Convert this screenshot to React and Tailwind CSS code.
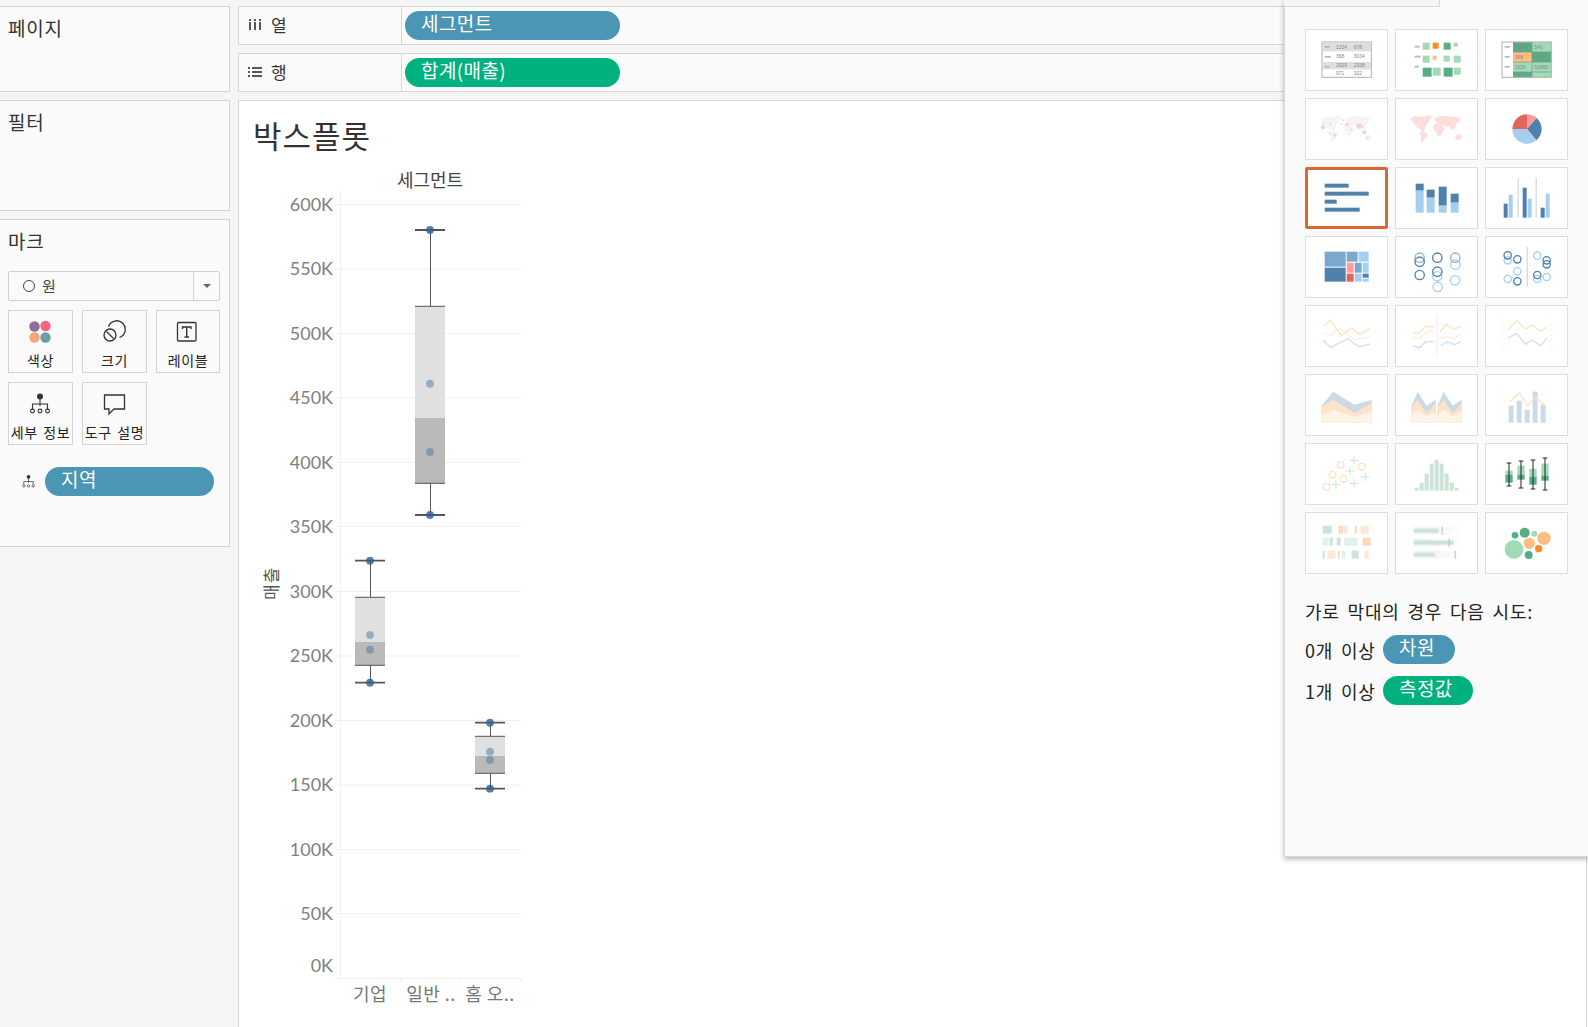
import React from 'react';

const blueDark = '#4f81ab';
const blueLight = '#a6cfef';
const green = '#9fdcb5';
const greenDark = '#57ad85';
const orange = '#ffbe7d';
const faintOrange = '#fde3c8';
const faintOrange2 = '#fdeedd';
const faintBlue = '#d3dfeb';
const mint = '#cce4d8';

const Rects = ({ items, fill }) =>
  items.map(([x1, y1, x2, y2], i) => (
    <rect key={i} x={x1} y={y1} width={x2 - x1} height={y2 - y1} fill={fill} />
  ));

const Line = ({ points, color, width = 4 }) => (
  <polyline points={points} fill="none" stroke={color} strokeWidth={width} />
);

const Circles = ({ items, color, r = 11, width = 4 }) =>
  items.map(([cx, cy], i) => (
    <circle key={i} cx={cx} cy={cy} r={r} fill="none" stroke={color} strokeWidth={width} />
  ));

const TinyText = ({ items }) =>
  items.map(([x, y, t], i) => (
    <text key={i} x={x} y={y} fontSize="15" fill="#888" fontFamily="Liberation Sans, sans-serif">
      {t}
    </text>
  ));

const Ticks = ({ x }) =>
  [270, 285, 300, 315, 330, 345, 360].map((y) => (
    <rect key={y} x={x} y={y} width="9" height="2" fill="#eee" />
  ));

const MapLand = ({ ox, oy, fill }) => (
  <g transform={`translate(${ox} ${oy})`} fill={fill}>
    <polygon points="47,60 60,55 85,57 100,52 112,56 105,66 98,74 92,86 88,98 82,102 78,94 68,90 58,78 50,68" />
    <polygon points="74,100 92,103 97,112 88,124 81,136 78,120" />
    <polygon points="118,62 128,56 150,54 176,56 198,60 192,72 184,78 180,92 170,96 162,86 146,82 126,76" />
    <polygon points="114,80 128,76 142,82 148,94 138,110 128,118 124,102 116,96" />
    <polygon points="180,114 194,108 202,120 190,126 182,124" />
  </g>
);

const thumbs = [
  {
    ox: 76, oy: 88,
    draw: (
      <>
        <rect x="127" y="127" width="148" height="106" fill="#fff" stroke="#b0b0b0" strokeWidth="3" />
        <Rects fill="#dedede" items={[[129, 129, 274, 155], [129, 187, 274, 209]]} />
        <Rects fill="#b5b5b5" items={[[135, 139, 150, 144], [135, 169, 153, 174], [135, 199, 148, 204]]} />
        <TinyText items={[[169, 147, '1234'], [222, 147, '678'], [169, 174, '368'], [222, 174, '3034'], [169, 202, '2929'], [222, 202, '2938'], [169, 225, '971'], [222, 225, '322']]} />
      </>
    ),
  },
  {
    ox: 346, oy: 88,
    draw: (
      <>
        <Rects fill="#bbb" items={[[405, 138, 420, 144], [405, 168, 423, 174], [405, 198, 417, 204]]} />
        <Rects fill={green} items={[[429, 129, 450, 150], [522, 129, 534, 141], [429, 168, 450, 189], [492, 168, 510, 186], [522, 168, 543, 189], [459, 204, 483, 228], [522, 204, 543, 225]]} />
        <Rects fill={greenDark} items={[[492, 129, 513, 150], [429, 204, 456, 231], [492, 204, 519, 231]]} />
        <Rects fill="#f28e2b" items={[[459, 129, 477, 147]]} />
        <Rects fill={orange} items={[[459, 168, 471, 180]]} />
      </>
    ),
  },
  {
    ox: 616, oy: 88,
    draw: (
      <>
        <rect x="667" y="127" width="148" height="106" fill="#fff" />
        <Rects fill={greenDark} items={[[700, 127, 757, 157], [757, 157, 815, 187], [700, 217, 757, 233]]} />
        <Rects fill={green} items={[[757, 127, 815, 157], [700, 187, 757, 217], [757, 187, 815, 217], [757, 217, 815, 233]]} />
        <Rects fill={orange} items={[[700, 157, 757, 187]]} />
        <Rects fill="#8a8a8a" items={[[700, 156, 815, 158], [700, 186, 815, 188], [700, 216, 815, 218], [756, 127, 758, 233]]} />
        <Rects fill="#b5b5b5" items={[[675, 139, 690, 144], [675, 169, 690, 174], [675, 199, 690, 204]]} />
        <rect x="667" y="127" width="148" height="106" fill="none" stroke="#b0b0b0" strokeWidth="3" />
        <TinyText items={[[705, 147, '1234'], [764, 147, '546'], [705, 177, '368'], [764, 177, '380'], [705, 207, '2929'], [764, 207, '52880']]} />
      </>
    ),
  },
  {
    ox: 76, oy: 295,
    draw: (
      <>
        <MapLand ox={76} oy={295} fill="#f5f5f5" />
        {[[130, 383, 6], [132, 372, 3], [152, 372, 3], [190, 362, 3], [186, 372, 3], [202, 374, 5], [238, 379, 8], [214, 390, 3], [254, 398, 6], [250, 381, 3], [150, 401, 3], [166, 406, 5], [264, 416, 3]].map(([cx, cy, r], i) => (
          <circle key={i} cx={cx} cy={cy} r={r} fill="#f3cfcf" />
        ))}
      </>
    ),
  },
  {
    ox: 346, oy: 295,
    draw: <MapLand ox={346} oy={295} fill="#fcdedc" />,
  },
  {
    ox: 616, oy: 295,
    draw: (
      <>
        <path d="M742 388 L742 344 A44 44 0 0 1 771 355 Z" fill="#ff9d9a" />
        <path d="M742 388 L771 355 A44 44 0 0 1 770 422 Z" fill={blueDark} />
        <path d="M742 388 L770 422 A44 44 0 0 1 698 388 Z" fill={blueLight} />
        <path d="M742 388 L698 388 A44 44 0 0 1 742 344 Z" fill="#e5645b" />
      </>
    ),
  },
  {
    ox: 76, oy: 502, selected: true,
    draw: <Rects fill={blueDark} items={[[135, 552, 207, 564], [135, 576, 267, 588], [135, 600, 171, 612], [135, 624, 240, 636]]} />,
  },
  {
    ox: 346, oy: 502,
    draw: (
      <>
        <Rects fill={blueDark} items={[[408, 552, 432, 573], [441, 570, 465, 594], [477, 561, 501, 618], [513, 582, 537, 609]]} />
        <Rects fill={blueLight} items={[[408, 573, 432, 639], [441, 594, 465, 639], [477, 618, 501, 639], [513, 609, 537, 639]]} />
      </>
    ),
  },
  {
    ox: 616, oy: 502,
    draw: (
      <>
        <Rects fill="#ccc" items={[[714, 534, 717, 654], [768, 534, 771, 654]]} />
        <Rects fill={blueDark} items={[[672, 612, 684, 654], [729, 564, 741, 654], [783, 624, 795, 654]]} />
        <Rects fill={blueLight} items={[[687, 585, 699, 654], [744, 597, 756, 654], [798, 582, 810, 654]]} />
      </>
    ),
  },
  {
    ox: 46, oy: 19,
    draw: (
      <>
        <Rects fill="#7aa8cf" items={[[105, 66, 168, 111], [171, 66, 204, 96], [195, 99, 216, 129]]} />
        <Rects fill={blueDark} items={[[105, 114, 168, 156], [219, 132, 237, 144]]} />
        <Rects fill={blueLight} items={[[207, 66, 237, 96], [219, 99, 237, 129], [195, 132, 216, 156], [219, 147, 237, 156]]} />
        <Rects fill="#ff9d9a" items={[[171, 99, 192, 129]]} />
        <Rects fill="#e5645b" items={[[171, 132, 192, 156]]} />
      </>
    ),
  },
  {
    ox: 316, oy: 19,
    draw: (
      <>
        <Circles r={14} color={blueLight} items={[[497, 105], [496, 152], [444, 172], [443, 140]]} />
        <Circles r={14} color="#8fb4d4" items={[[497, 84], [390, 84]]} />
        <Circles r={14} color={blueDark} items={[[390, 96], [443, 84], [390, 136], [443, 126]]} />
      </>
    ),
  },
  {
    ox: 586, oy: 19,
    draw: (
      <>
        <Rects fill="#ccc" items={[[711, 51, 714, 171]]} />
        <Circles color={blueLight} items={[[654, 92], [683, 125], [654, 148], [743, 78], [743, 148], [771, 142]]} />
        <Circles color={blueDark} items={[[654, 77], [683, 89], [683, 155], [771, 92], [771, 104], [743, 136]]} />
      </>
    ),
  },
  {
    ox: 46, oy: 226,
    draw: (
      <>
        <Line color={faintOrange2} points="102,308 123,317 150,296 195,330 240,322" />
        <Line color={faintOrange} points="102,290 123,272 156,318 186,294 207,314 242,297" />
        <Line color={faintBlue} points="100,332 123,354 174,327 210,352 242,343" />
      </>
    ),
  },
  {
    ox: 316, oy: 226,
    draw: (
      <>
        <Rects fill="#eee" items={[[441, 258, 444, 378]]} />
        <Line color={faintOrange2} points="369,325 390,327 420,300 432,310" />
        <Line color={faintOrange} points="369,308 387,311 408,290 432,292" />
        <Line color={faintBlue} points="369,349 390,354 408,336 432,336" />
        <Line color={faintOrange2} points="450,327 470,321 492,327 513,313" />
        <Line color={faintOrange} points="452,307 470,283 490,299 513,292" />
        <Line color={faintBlue} points="453,349 472,336 495,345 513,336" />
      </>
    ),
  },
  {
    ox: 586, oy: 226,
    draw: (
      <>
        <Ticks x={636} />
        <Ticks x={780} />
        <Line color={faintOrange} points="654,300 681,274 708,298 726,286 753,306 772,292" />
        <Line color={faintBlue} points="654,325 681,312 708,344 726,331 753,348 772,324" />
      </>
    ),
  },
  {
    ox: 46, oy: 433,
    draw: (
      <>
        <polygon fill="#ccd9e6" points="96,528 131,486 195,525 246,510 246,579 96,579" />
        <polygon fill="#fde4c8" points="96,530 131,510 195,549 246,520 246,579 96,579" />
        <polygon fill="#fef3e6" points="96,558 131,540 195,562 246,545 246,579 96,579" />
      </>
    ),
  },
  {
    ox: 316, oy: 433,
    draw: (
      <>
        {[0, 78].map((dx) => (
          <g key={dx} transform={`translate(${dx} 0)`}>
            <polygon fill="#ccd9e6" points="366,528 384,486 411,528 438,510 438,579 366,579" />
            <polygon fill="#fde4c8" points="366,534 384,510 411,550 438,522 438,579 366,579" />
            <polygon fill="#fef3e6" points="366,556 384,540 411,560 438,546 438,579 366,579" />
          </g>
        ))}
      </>
    ),
  },
  {
    ox: 586, oy: 433,
    draw: (
      <>
        <Rects fill="#f0f0f0" items={[[636, 477, 645, 479], [636, 498, 645, 500], [636, 519, 645, 521], [636, 540, 645, 542], [636, 567, 645, 569], [780, 477, 789, 479], [780, 498, 789, 500], [780, 519, 789, 521], [780, 540, 789, 542], [780, 567, 789, 569]]} />
        <Rects fill="#ccd9e6" items={[[657, 528, 672, 579], [681, 513, 696, 579], [705, 540, 720, 579], [729, 486, 744, 579], [753, 525, 768, 579]]} />
        <Line color={faintOrange} points="660,516 690,490 714,528 738,502 766,528" />
      </>
    ),
  },
  {
    ox: 46, oy: 220,
    draw: (
      <>
        <Circles r={10} color={faintOrange} items={[[153, 285], [129, 315], [216, 291], [162, 327], [111, 351]]} />
        {[[193, 272], [181, 304], [139, 344], [227, 322], [193, 341]].map(([x, y], i) => (
          <path key={i} d={`M${x - 13} ${y}H${x + 13}M${x} ${y - 13}V${y + 13}`} stroke="#c9e5d9" strokeWidth="3" />
        ))}
      </>
    ),
  },
  {
    ox: 316, oy: 220,
    draw: <Rects fill={mint} items={[[375, 354], [390, 339], [405, 312], [420, 282], [435, 270], [450, 282], [465, 312], [480, 339], [495, 354]].map(([x, y]) => [x, y, x + 12, 363])} />,
  },
  {
    ox: 586, oy: 220,
    draw: (
      <>
        {[[658, 280, 349, 303, 315, 339], [694, 274, 355, 288, 315, 330], [730, 271, 358, 297, 321, 345], [766, 265, 361, 282, 318, 333]].map(([x, top, bottom, boxTop, mid, boxBottom]) => (
          <g key={x}>
            <rect x={x - 11} y={boxTop} width="22" height={mid - boxTop} fill={green} />
            <rect x={x - 11} y={mid} width="22" height={boxBottom - mid} fill={greenDark} />
            <path d={`M${x} ${top}V${bottom}M${x - 7} ${top}H${x + 7}M${x - 7} ${bottom}H${x + 7}`} stroke="#222" strokeWidth="3" fill="none" />
          </g>
        ))}
      </>
    ),
  },
  {
    ox: 46, oy: 427,
    draw: (
      <>
        <Rects fill={mint} items={[[99, 468, 126, 492], [120, 504, 129, 528], [141, 504, 153, 528], [99, 543, 105, 567], [186, 543, 207, 567]]} />
        <Rects fill="#fdd9b8" items={[[147, 468, 160, 492], [195, 468, 201, 492], [219, 504, 243, 528], [144, 543, 150, 567]]} />
        <Rects fill="#fde8d4" items={[[162, 468, 174, 492], [213, 468, 237, 492], [114, 543, 138, 567], [225, 543, 237, 567]]} />
        <Rects fill="#e2f2ea" items={[[99, 504, 117, 528], [162, 504, 204, 528], [156, 543, 168, 567]]} />
      </>
    ),
  },
  {
    ox: 316, oy: 427,
    draw: (
      <>
        {[[471, 447, 457], [507, 492, 478], [543, 435, 496]].map(([y, barEnd, marker]) => (
          <g key={y}>
            <rect x="372" y={y} width="75" height="24" fill="#f3f3f3" />
            <rect x="447" y={y} width="45" height="24" fill="#f9f9f9" />
            <rect x="492" y={y} width="18" height="24" fill="#fcfcfc" />
            <rect x="372" y={y + 6} width={barEnd - 372} height="12" fill={mint} />
            <rect x={marker - 1} y={y} width="3" height="24" fill="#bbb" />
          </g>
        ))}
      </>
    ),
  },
  {
    ox: 586, oy: 427,
    draw: (
      <>
        {[[676, 497, 10, greenDark], [705, 489, 15, greenDark], [734, 492, 9, green], [763, 506, 20, orange], [719, 521, 17, orange], [747, 537, 11, '#f28e2b'], [717, 556, 12, greenDark], [673, 539, 28, green]].map(([cx, cy, r, fill], i) => (
          <circle key={i} cx={cx} cy={cy} r={r} fill={fill} />
        ))}
      </>
    ),
  },
];

const Thumb = ({ ox, oy, selected, draw }) => (
  <div className={`relative h-[62px] w-[83px] bg-white ${selected ? 'rounded-[2px] border-[3px] border-[#dd6633]' : 'border border-[#dedede]'}`}>
    <svg
      className={`absolute ${selected ? 'left-[-2px] top-[-2px]' : 'left-0 top-0'}`}
      width="81"
      height="60"
      viewBox={`${ox + 3} ${oy + 3} 243 180`}
    >
      {draw}
    </svg>
  </div>
);

const Pill = ({ label, color, className }) => (
  <div className={`h-[29px] rounded-full pl-[16px] text-[19px] leading-[24px] tracking-[0.4px] text-white ${className}`} style={{ backgroundColor: color }}>
    {label}
  </div>
);

const ColorIcon = () => (
  <svg width="24" height="24" viewBox="0 0 24 24">
    <circle cx="6.5" cy="6.5" r="5.2" fill="#8e6f9e" />
    <circle cx="17.5" cy="6" r="5.2" fill="#f4677f" />
    <circle cx="6.5" cy="17.5" r="5.2" fill="#f4a77d" />
    <circle cx="17.5" cy="17.5" r="5.2" fill="#6e9daa" />
  </svg>
);

const SizeIcon = () => (
  <svg width="24" height="24" viewBox="0 0 24 24" fill="none" stroke="#333" strokeWidth="1.3">
    <path d="M6.5 6.5A8.6 8.6 0 1 1 17.5 17.5" />
    <circle cx="8" cy="15" r="6" />
    <path d="M4.5 11.5L11.5 18.5" />
  </svg>
);

const LabelIcon = () => (
  <svg width="24" height="24" viewBox="0 0 24 24" fill="none" stroke="#333">
    <rect x="2.5" y="2.5" width="18.5" height="18.5" rx="1" strokeWidth="1.3" />
    <path d="M7.5 9V7H16V9M11.7 7V17M9.5 17H14" strokeWidth="1.4" />
  </svg>
);

const DetailIcon = ({ size = 24 }) => (
  <svg width={size} height={size} viewBox="0 0 24 24" fill="none" stroke="#333" strokeWidth="1.1">
    <circle cx="12" cy="4.5" r="3" fill="#333" stroke="none" />
    <path d="M12 7V14M4.5 17V12H19.5V17" />
    <circle cx="4.5" cy="19" r="1.9" />
    <circle cx="12" cy="19" r="1.9" />
    <circle cx="19.5" cy="19" r="1.9" />
  </svg>
);

const TooltipIcon = () => (
  <svg width="24" height="24" viewBox="0 0 24 24" fill="none" stroke="#333" strokeWidth="1.3">
    <path d="M2.5 3H22.5V17H12L7 22V17H2.5Z" />
  </svg>
);

const MarkCard = ({ icon, label, className = 'w-[65px]' }) => (
  <div className={`flex h-[63px] flex-col items-center border border-[#d4d4d4] pt-[9px] ${className}`}>
    <div className="h-[24px] pr-[2px]">{icon}</div>
    <div className="mt-[7px] whitespace-nowrap text-[14px] leading-[18px] tracking-[0.6px] text-[#222] [word-spacing:2px]">{label}</div>
  </div>
);

const Section = ({ title, className, children }) => (
  <div className={`border-y border-r border-[#d2d2d2] bg-[#fafafa] ${className}`}>
    <div className="pl-[8px] pt-[8px] text-[19px] leading-[25px] tracking-[0.8px] text-[#333]">{title}</div>
    {children}
  </div>
);

const Shelf = ({ icon, label, pill, color }) => (
  <div className="flex h-[39px] border-y border-l border-[#d6d6d6] bg-[#fafafa]">
    <div className="flex w-[163px] items-center border-r border-[#d6d6d6] pb-[2px] pl-[9px] text-[17px] text-[#333]">
      <div className="w-[23px]">{icon}</div>
      {label}
    </div>
    <div className="pl-[3px] pt-[4px]">
      <Pill label={pill} color={color} className="w-[215px]" />
    </div>
  </div>
);

const axisLabels = ['600K', '550K', '500K', '450K', '400K', '350K', '300K', '250K', '200K', '150K', '100K', '50K'];
const axisY = [204, 268.5, 333, 397.5, 462, 526, 591, 655.5, 720, 784.5, 849, 913];

const boxes = [
  { x: 370.5, top: 560.7, q3: 597.3, mid: 642, q1: 665.3, bottom: 682.7, dots: [635, 649.7] },
  { x: 430.5, top: 230, q3: 306.3, mid: 418, q1: 483.3, bottom: 515, dots: [383.7, 452] },
  { x: 490.5, top: 722.7, q3: 736.3, mid: 756, q1: 773.3, bottom: 788.7, dots: [751.7, 760] },
];

const Chart = () => (
  <svg width="300" height="867" viewBox="239 160 300 867" className="block">
    <text x="430" y="187" textAnchor="middle" fontSize="18" fill="#444" fontFamily="Noto Sans CJK KR, sans-serif">세그먼트</text>
    <text transform="translate(278 600) rotate(-90)" fontSize="17" letterSpacing="1" fill="#555" fontFamily="Noto Sans CJK KR, sans-serif">매출</text>

    {axisY.map((y) => (
      <rect key={y} x="335" y={y} width="186" height="1" fill="#f0f0f0" />
    ))}
    <rect x="335" y="978" width="186" height="1" fill="#f0f0f0" />
    <rect x="340" y="190" width="1" height="792" fill="#f0f0f0" />
    {[400, 460, 520].map((x) => (
      <rect key={x} x={x} y="979" width="1" height="3" fill="#f0f0f0" />
    ))}

    {axisLabels.map((label, i) => (
      <text key={label} x="333" y={axisY[i] + 6.8} textAnchor="end" fontSize="18" fill="#808080" fontFamily="Lato, sans-serif">{label}</text>
    ))}
    <text x="333" y="972" textAnchor="end" fontSize="18" fill="#808080" fontFamily="Lato, sans-serif">0K</text>

    {boxes.map((b) => (
      <g key={b.x}>
        <rect x={b.x - 15.5} y={b.q3} width="30" height={b.mid - b.q3} fill="#e0e0e0" />
        <rect x={b.x - 15.5} y={b.mid} width="30" height={b.q1 - b.mid} fill="#bababa" />
        <path d={`M${b.x} ${b.top}V${b.q3}M${b.x} ${b.q1}V${b.bottom}`} stroke="#555" strokeWidth="1" />
        <path d={`M${b.x - 15.5} ${b.q3}h30M${b.x - 15.5} ${b.q1}h30`} stroke="#555" strokeWidth="1" />
        <path d={`M${b.x - 15.5} ${b.top}h30M${b.x - 15.5} ${b.bottom}h30`} stroke="#555" strokeWidth="1.8" />
        {[b.top, b.bottom].map((y) => (
          <circle key={y} cx={b.x - 0.5} cy={y} r="3.9" fill="#2f5f92" opacity="0.8" />
        ))}
        {b.dots.map((y) => (
          <circle key={y} cx={b.x - 0.5} cy={y} r="3.9" fill="#3f6c9b" opacity="0.45" />
        ))}
      </g>
    ))}

    <text x="370" y="1001" textAnchor="middle" fontSize="18" letterSpacing="0.5" fill="#777" fontFamily="Noto Sans CJK KR, sans-serif">기업</text>
    <text x="431" y="1001" textAnchor="middle" fontSize="18" letterSpacing="0.5" fill="#777" fontFamily="Noto Sans CJK KR, sans-serif">일반 ..</text>
    <text x="490" y="1001" textAnchor="middle" fontSize="18" letterSpacing="0.5" fill="#777" fontFamily="Noto Sans CJK KR, sans-serif">홈 오..</text>
  </svg>
);

export default function App() {
  return (
    <div className="relative flex h-[1027px] w-[1588px] overflow-hidden bg-[#f5f5f5] font-['Noto_Sans_CJK_KR',sans-serif]">
      {/* left cards */}
      <div className="flex w-[230px] shrink-0 flex-col gap-[8px] pt-[6px]">
        <Section title="페이지" className="h-[86px]" />
        <Section title="필터" className="h-[111px]" />
        <Section title="마크" className="h-[328px]">
          <div className="mx-[8px] mt-[18px] flex h-[30px] w-[212px] items-center rounded-[2px] border border-[#d0d0d0]">
            <div className="flex flex-1 items-center gap-[7px] pl-[14px] text-[15px] text-[#444]">
              <span className="h-[12px] w-[12px] rounded-full border-[1.5px] border-[#444]" />
              원
            </div>
            <div className="flex h-full w-[26px] items-center justify-center border-l border-[#d8d8d8]">
              <span className="h-0 w-0 border-x-[4px] border-t-[4px] border-x-transparent border-t-[#666]" />
            </div>
          </div>
          <div className="ml-[8px] mt-[9px] flex w-[215px] flex-wrap gap-x-[9px] gap-y-[9px]">
            <MarkCard icon={<ColorIcon />} label="색상" />
            <MarkCard icon={<SizeIcon />} label="크기" />
            <MarkCard icon={<LabelIcon />} label="레이블" className="w-[64px]" />
            <MarkCard icon={<DetailIcon />} label="세부 정보" />
            <MarkCard icon={<TooltipIcon />} label="도구 설명" />
          </div>
          <div className="mt-[22px] flex items-center pl-[21px]">
            <div className="w-[24px]"><DetailIcon size={15} /></div>
            <Pill label="지역" color="#4b96b4" className="w-[169px]" />
          </div>
        </Section>
      </div>

      {/* shelves + view */}
      <div className="ml-[8px] flex w-[1349px] shrink-0 flex-col gap-[8px] pt-[6px]">
        <Shelf
          icon={<svg width="14" height="12" viewBox="0 0 14 12" fill="#555"><path d="M1 3h2v8H1zM1 0h2v2H1zM6 3h2v8H6zM6 0h2v2H6zM11 3h2v8h-2zM11 0h2v2h-2z" /></svg>}
          label="열"
          pill="세그먼트"
          color="#4b96b4"
        />
        <Shelf
          icon={<svg width="14" height="12" viewBox="0 0 14 12" fill="#555"><path d="M0 1h2v2H0zM4 1h10v2H4zM0 5h2v2H0zM4 5h10v2H4zM0 9h2v2H0zM4 9h10v2H4z" /></svg>}
          label="행"
          pill="합계(매출)"
          color="#00b180"
        />
        <div className="flex-1 border-l border-r border-t border-[#d6d6d6] bg-white">
          <div className="h-[59px] pl-[14px] pt-[13px] text-[31px] leading-[42px] tracking-[1px] text-[#333]">박스플롯</div>
          <Chart />
        </div>
      </div>

      {/* show me panel */}
      <div className="absolute right-0 top-0 h-[857px] w-[304px] border-b border-l border-[#d8d8d8] bg-[#fafafa] pl-[20px] pt-[29px] shadow-[0_2px_5px_rgba(0,0,0,0.3)]">
        <div className="absolute left-[-1px] top-0 h-[7px] w-[156px] border-b border-r border-[#d8d8d8] bg-[#f5f5f5]" />
        <div className="grid w-[263px] grid-cols-[83px_83px_83px] gap-x-[7px] gap-y-[7px]">
          {thumbs.map((t) => (
            <Thumb key={`${t.ox}-${t.oy}`} {...t} />
          ))}
        </div>
        <div className="mt-[24px] text-[18px] leading-[27px] tracking-[0.8px] text-[#222] [word-spacing:3px]">가로 막대의 경우 다음 시도:</div>
        <div className="mt-[10px] flex items-center gap-[7px] text-[18px] text-[#222]">
          <span className="w-[71px] whitespace-nowrap pt-[2px] tracking-[0.8px] [word-spacing:3px]">0개 이상</span>
          <Pill label="차원" color="#4b96b4" className="w-[72px]" />
        </div>
        <div className="mt-[12px] flex items-center gap-[7px] text-[18px] text-[#222]">
          <span className="w-[71px] whitespace-nowrap pt-[2px] tracking-[0.8px] [word-spacing:3px]">1개 이상</span>
          <Pill label="측정값" color="#00b180" className="w-[90px]" />
        </div>
      </div>
    </div>
  );
}
